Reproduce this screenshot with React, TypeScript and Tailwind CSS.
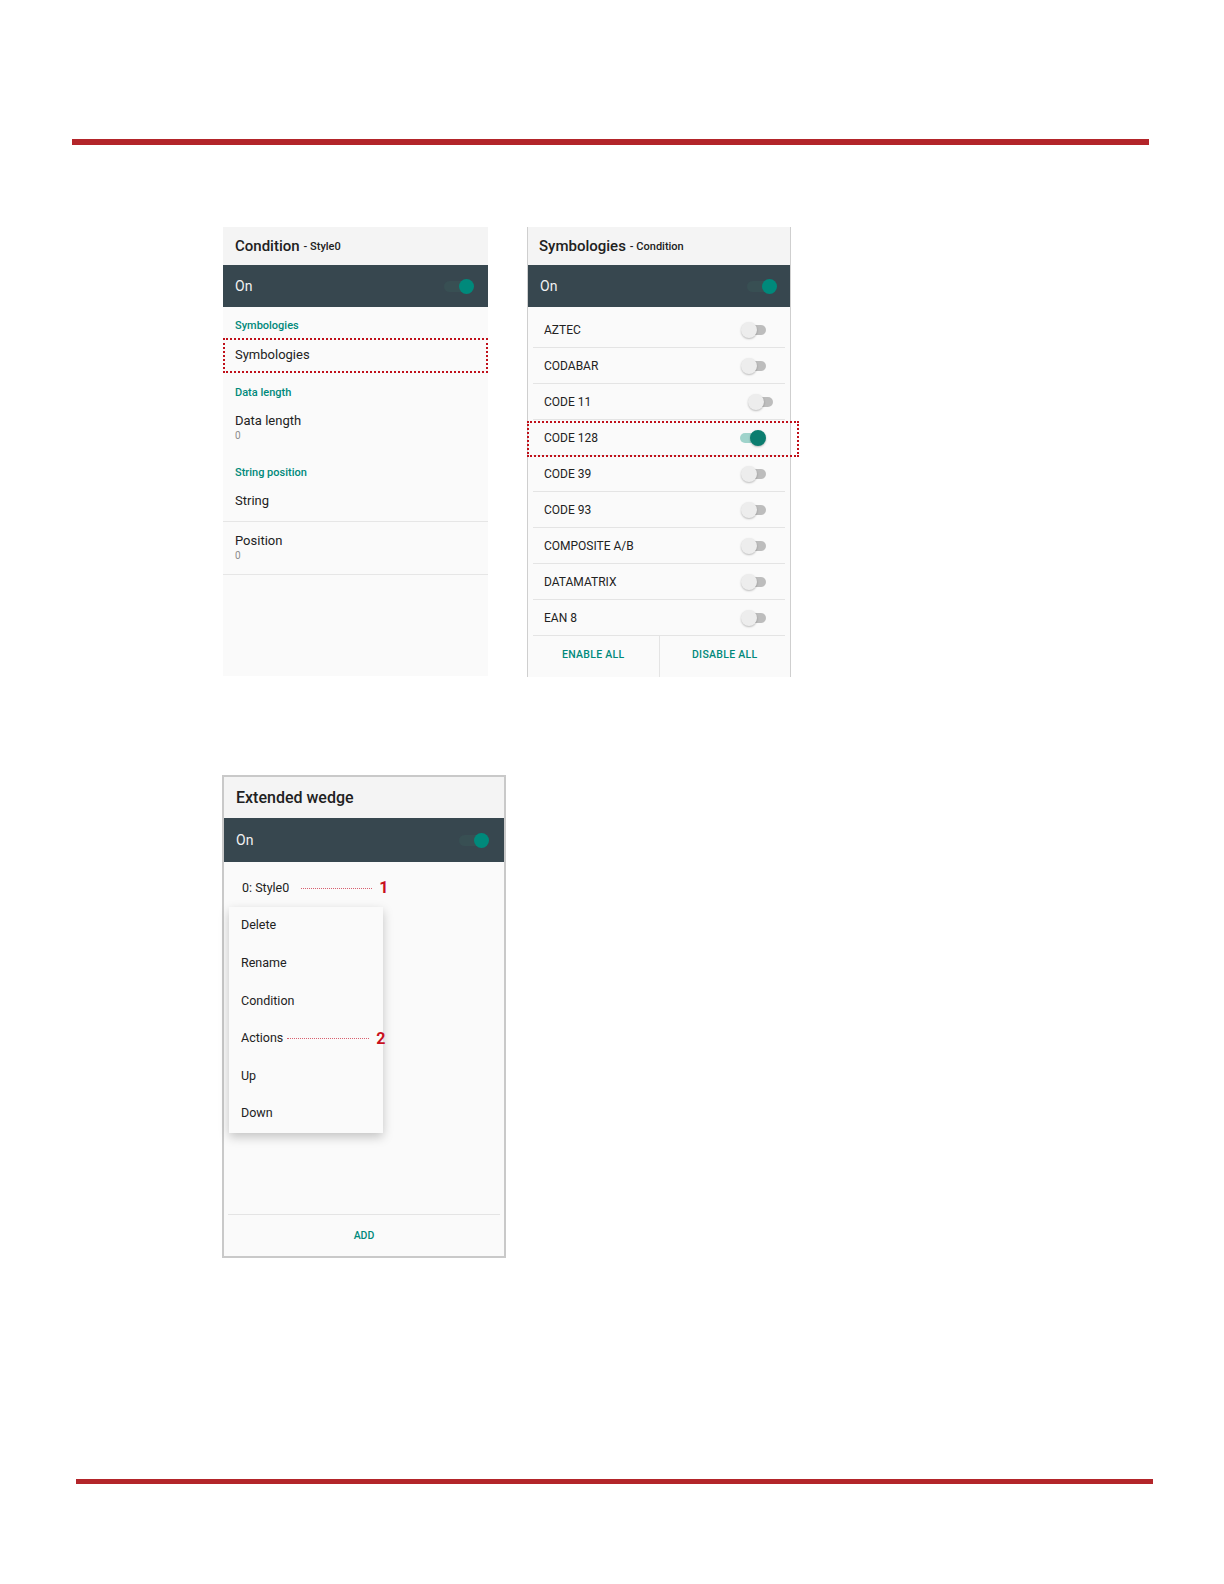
import React from 'react'

const teal = 'text-[#00897b]'

function DarkToggle() {
  return (
    <div className="relative w-[30px] h-[15px]">
      <div className="absolute left-0 top-[2px] w-[27px] h-[11px] rounded-full bg-[#384f53]" />
      <div className="absolute right-0 top-0 w-[15px] h-[15px] rounded-full bg-[#00897b]" />
    </div>
  )
}

function OffToggle() {
  return (
    <div className="relative w-[25px] h-[16px]">
      <div className="absolute right-0 top-[3px] w-[21px] h-[10px] rounded-full bg-[#bdbdbd]" />
      <div className="absolute left-0 top-0 w-[16px] h-[16px] rounded-full bg-[#ededed] shadow-[0_1px_2px_rgba(0,0,0,0.25)]" />
    </div>
  )
}

function OnToggle() {
  return (
    <div className="relative w-[26px] h-[16px]">
      <div className="absolute left-0 top-[3px] w-[23px] h-[10px] rounded-full bg-[#9fd3cb]" />
      <div className="absolute right-0 top-0 w-[16px] h-[16px] rounded-full bg-[#0b7d6f] shadow-[0_1px_2px_rgba(0,0,0,0.25)]" />
    </div>
  )
}

function OnBar({ h, pr }: { h: string; pr: string }) {
  return (
    <div className={`flex items-center justify-between bg-[#37474f] pl-[12px] ${h} ${pr}`}>
      <span className="text-[14px] text-[#f2f2f2]">On</span>
      <DarkToggle />
    </div>
  )
}

function ConditionPanel() {
  return (
    <div className="flex h-[449px] w-[265px] flex-col bg-[#fafafa]">
      <div className="flex h-[38px] items-center bg-[#f4f4f4] pl-[12px] text-[#212121]">
        <span className="text-[15px] font-medium">Condition</span>
        <span className="ml-[4px] mt-[2px] text-[11px] font-medium">- Style0</span>
      </div>
      <OnBar h="h-[42px]" pr="pr-[14px]" />
      <div className={`flex h-[31px] items-center pl-[12px] pt-[8px] text-[11px] font-medium ${teal}`}>Symbologies</div>
      <div className="flex h-[35px] items-center border-2 border-dotted border-[#c0101a] pb-[2px] pl-[10px] text-[13px] text-[#222]">
        Symbologies
      </div>
      <div className={`flex h-[32px] items-center pl-[12px] pt-[9px] text-[11px] font-medium ${teal}`}>Data length</div>
      <div className="h-[50px] pl-[12px] pt-[8px]">
        <div className="text-[13px] leading-[16px] text-[#222]">Data length</div>
        <div className="text-[10px] leading-[14px] text-[#8c8c8c]">0</div>
      </div>
      <div className={`flex h-[36px] items-center pl-[12px] text-[11px] font-medium ${teal}`}>String position</div>
      <div className="h-[31px] border-b border-[#e6e6e6] pl-[12px] pt-[2px] text-[13px] leading-[16px] text-[#222]">String</div>
      <div className="h-[53px] border-b border-[#e6e6e6] pl-[12px] pt-[11px]">
        <div className="text-[13px] leading-[16px] text-[#222]">Position</div>
        <div className="text-[10px] leading-[14px] text-[#8c8c8c]">0</div>
      </div>
    </div>
  )
}

const symbologies = [
  { name: 'AZTEC', on: false },
  { name: 'CODABAR', on: false },
  { name: 'CODE 11', on: false, shift: true },
  { name: 'CODE 128', on: true },
  { name: 'CODE 39', on: false },
  { name: 'CODE 93', on: false },
  { name: 'COMPOSITE A/B', on: false },
  { name: 'DATAMATRIX', on: false },
  { name: 'EAN 8', on: false },
]

function SymbologiesPanel() {
  return (
    <div className="flex h-[450px] w-[264px] flex-col border-x border-[#cfcfcf] bg-[#fafafa]">
      <div className="flex h-[38px] items-center bg-[#f4f4f4] pl-[11px] text-[#212121]">
        <span className="text-[15px] font-medium">Symbologies</span>
        <span className="ml-[4px] mt-[2px] text-[11px] font-medium">- Condition</span>
      </div>
      <OnBar h="h-[42px]" pr="pr-[13px]" />
      <div className="px-[5px] pt-[5px]">
        {symbologies.map((s) => (
          <div
            key={s.name}
            className={`relative flex h-[36px] items-center justify-between border-b border-[#e4e4e4] pl-[11px] ${s.shift ? 'pr-[12px]' : 'pr-[19px]'}`}
          >
            <span className="text-[12px] text-[#222]">{s.name}</span>
            {s.on ? <OnToggle /> : <OffToggle />}
            {s.on && (
              <div className="absolute left-[-6px] top-[1px] h-[36px] w-[272px] border-2 border-dotted border-[#c0101a]" />
            )}
          </div>
        ))}
      </div>
      <div className="flex h-[41px] items-center">
        <div className={`flex h-full flex-1 items-center justify-center border-r border-[#e4e4e4] pb-[3px] text-[10.5px] font-medium tracking-[0.3px] ${teal}`}>
          ENABLE ALL
        </div>
        <div className={`flex h-full flex-1 items-center justify-center pb-[3px] text-[10.5px] font-medium tracking-[0.3px] ${teal}`}>
          DISABLE ALL
        </div>
      </div>
    </div>
  )
}

const menu = ['Delete', 'Rename', 'Condition', 'Actions', 'Up', 'Down']

function Marker({ line, n }: { line: string; n: string }) {
  return (
    <>
      <div className={`h-0 border-t border-dotted border-[#d86070] ${line}`} />
      <span className="ml-[7px] text-[16px] font-bold leading-none text-[#c8101e]">{n}</span>
    </>
  )
}

function WedgePanel() {
  return (
    <div className="flex h-[483px] w-[284px] flex-col border-2 border-[#c9c9c9] bg-[#fafafa]">
      <div className="flex h-[41px] items-center bg-[#f4f4f4] pl-[12px] pt-[1px]">
        <span className="text-[16px] font-medium text-[#212121]">Extended wedge</span>
      </div>
      <OnBar h="h-[44px]" pr="pr-[15px]" />
      <div className="relative flex-1">
        <div className="flex h-[45px] items-center pl-[18px] pt-[7px]">
          <span className="text-[12.5px] text-[#222]">0: Style0</span>
          <div className="ml-[12px] flex items-center">
            <Marker line="w-[71px]" n="1" />
          </div>
        </div>
        <div className="absolute left-[5px] top-[45px] w-[154px] bg-[#fafafa] shadow-[0_4px_10px_rgba(0,0,0,0.22)]">
          {menu.map((m) => (
            <div key={m} className="flex h-[37.6px] items-center pl-[12px]">
              <span className="text-[12.5px] text-[#222]">{m}</span>
              {m === 'Actions' && (
                <div className="ml-[4px] flex items-center">
                  <Marker line="w-[82px]" n="2" />
                </div>
              )}
            </div>
          ))}
        </div>
      </div>
      <div className={`mx-[4px] flex h-[42px] items-center justify-center border-t border-[#e4e4e4] text-[10.5px] font-medium ${teal}`}>
        ADD
      </div>
    </div>
  )
}

export default function App() {
  return (
    <div className="h-[1584px] w-[1224px] bg-white pt-[139px] font-['Roboto',sans-serif]">
      <div className="ml-[72px] h-[6px] w-[1077px] bg-[#b3252a]" />
      <div className="ml-[223px] mt-[82px] flex items-start gap-[39px]">
        <ConditionPanel />
        <SymbologiesPanel />
      </div>
      <div className="ml-[222px] mt-[98px]">
        <WedgePanel />
      </div>
      <div className="ml-[76px] mt-[221px] h-[5px] w-[1077px] bg-[#b3252a]" />
    </div>
  )
}
